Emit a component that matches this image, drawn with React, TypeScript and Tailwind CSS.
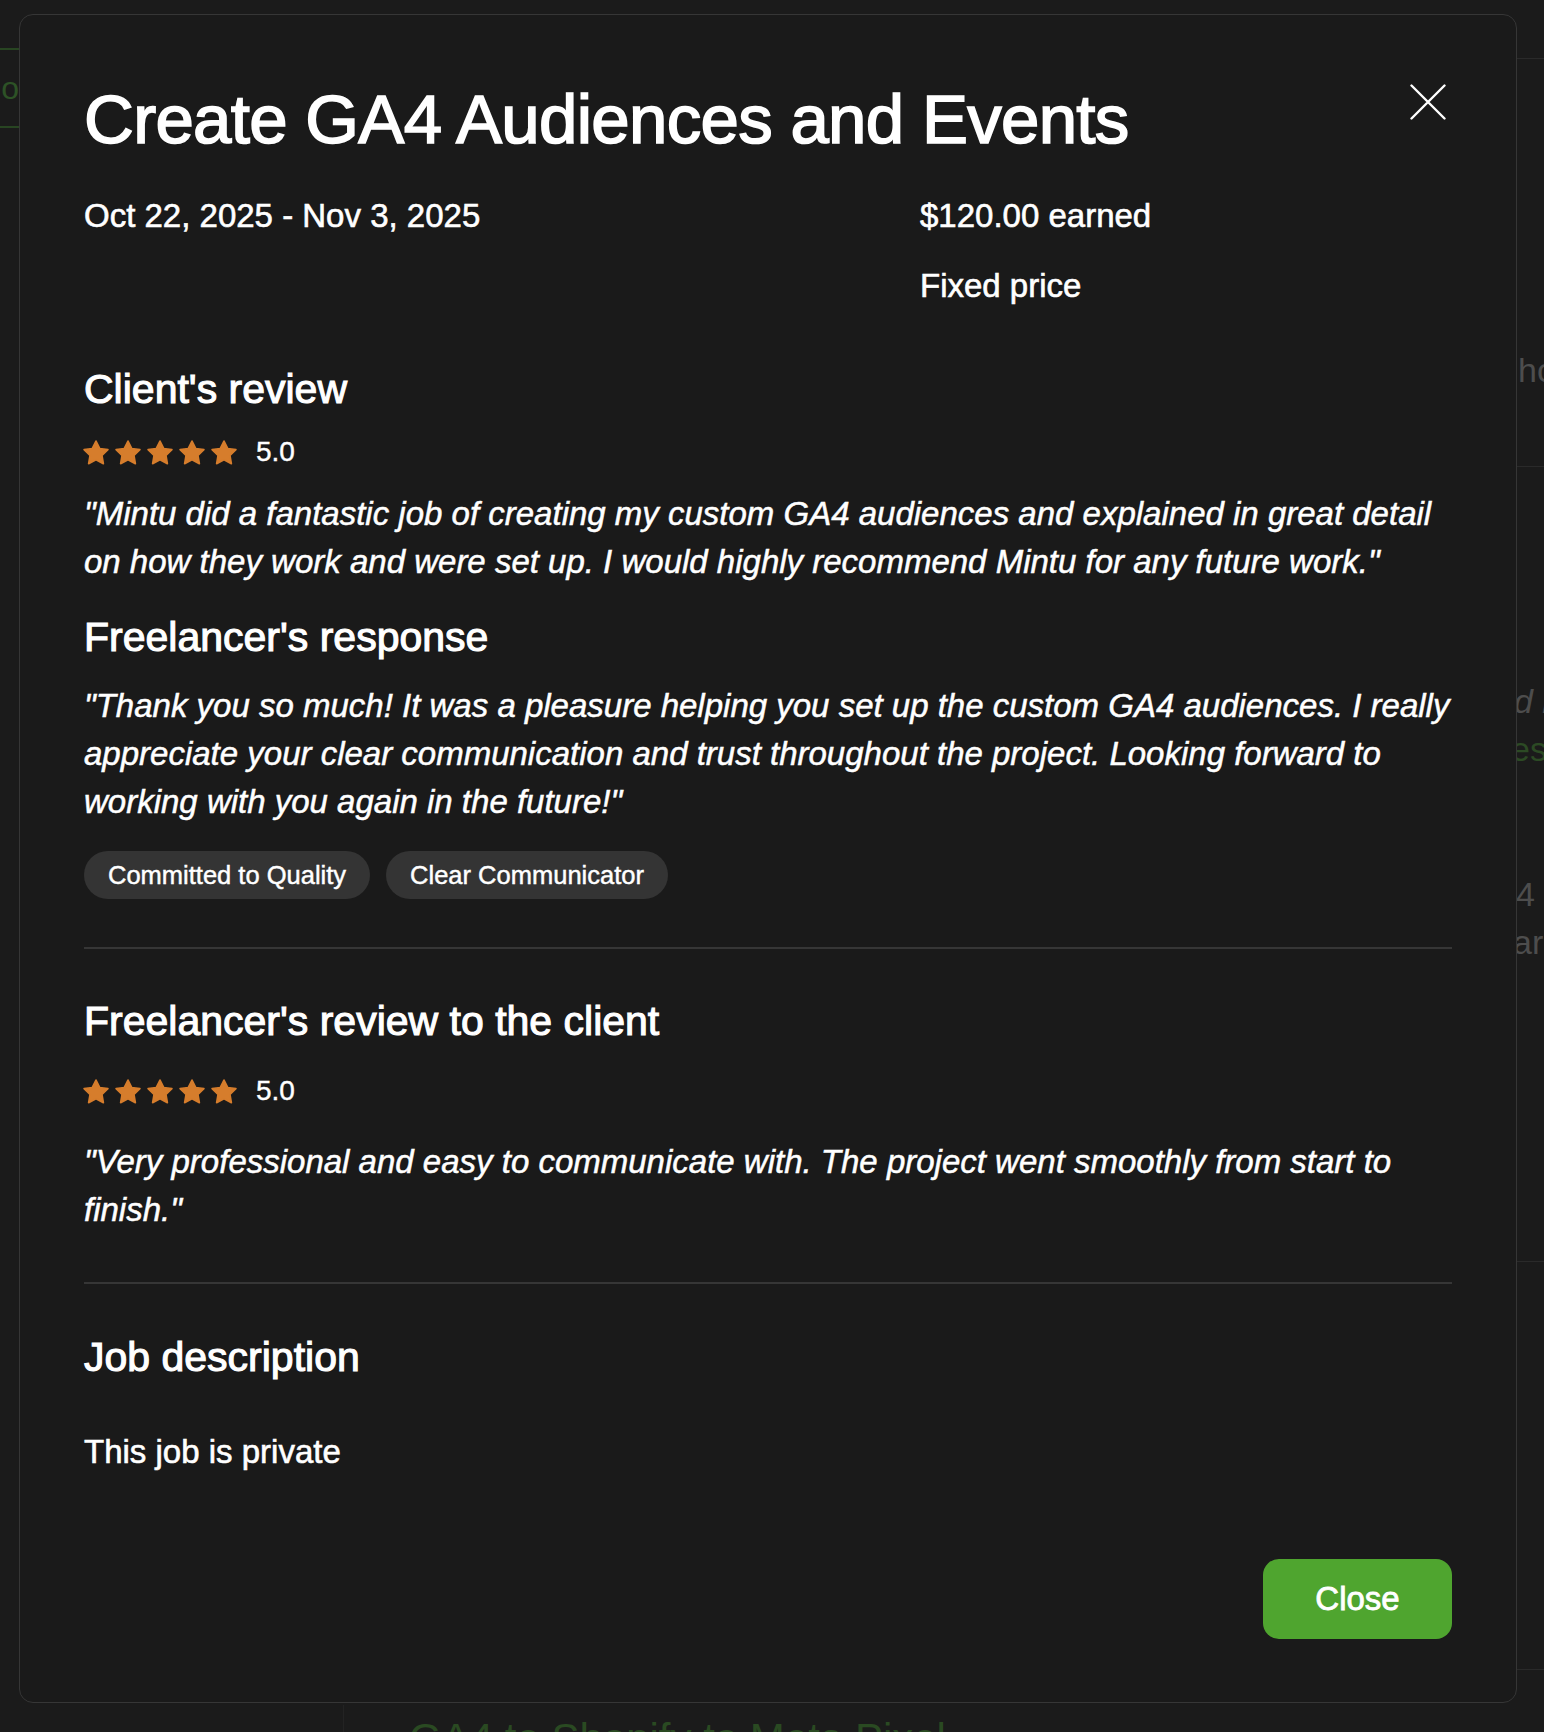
import React from "react";

const Star = () => (
  <svg width="24" height="23" viewBox="2 2 20 19.3" className="overflow-visible" aria-hidden="true">
    <path
      d="M12 2l3.09 6.26L22 9.27l-5 4.87 1.18 6.88L12 17.77l-6.18 3.25L7 14.14 2 9.27l6.91-1.01L12 2z"
      fill="#d67d2c"
      stroke="#d67d2c"
      strokeWidth="1.4"
      strokeLinejoin="round"
    />
  </svg>
);

const Rating = ({ value }: { value: string }) => (
  <div className="flex h-[32px] items-center">
    <div className="flex items-center gap-[8px]">
      {[0, 1, 2, 3, 4].map((i) => (
        <Star key={i} />
      ))}
    </div>
    <span className="ml-[20px] text-[28px] leading-[32px] text-white [-webkit-text-stroke:0.4px_white]">{value}</span>
  </div>
);

const Heading = ({ children, className = "" }: { children: React.ReactNode; className?: string }) => (
  <h2 className={`text-[41px] leading-[48px] font-normal text-white [-webkit-text-stroke:1.1px_white] ${className}`}>
    {children}
  </h2>
);

const Quote = ({ children, className = "" }: { children: React.ReactNode; className?: string }) => (
  <p className={`text-[33px] leading-[48px] italic text-white [-webkit-text-stroke:0.5px_white] ${className}`}>
    {children}
  </p>
);

const Tag = ({ label }: { label: string }) => (
  <span className="flex h-[48px] items-center rounded-full bg-[#343434] px-[24px] text-[25.5px] text-white [-webkit-text-stroke:0.45px_white]">
    {label}
  </span>
);

export default function App() {
  return (
    <div className="relative h-[1732px] w-[1544px] overflow-hidden bg-[#1b1b1b] font-['Liberation_Sans',Arial,sans-serif]">
      {/* page behind the dialog */}
      <div className="flex h-full">
        <div className="w-[19px] shrink-0 overflow-hidden pt-[48px]">
          <div className="flex h-[80px] items-center justify-end border-y-2 border-[#284522] text-[32px] text-[#2d5226]">
            o
          </div>
        </div>
        <div className="flex flex-1 flex-col justify-end">
          <div className="ml-[324px] h-[27px] overflow-hidden border-l border-[#232323] pl-[65px]">
            <div className="mt-[10px] whitespace-nowrap text-[42px] leading-[48px] text-[#2a4a22]">
              GA4 to Shopify to Meta Pixel
            </div>
          </div>
        </div>
        <div className="flex w-[27px] shrink-0 flex-col overflow-visible pt-[58px] text-[34px] text-[#4d4d4d]">
          <div className="h-px bg-[#2a2a2a]" />
          <div className="mt-[291px] h-[40px] whitespace-nowrap pl-[1px] leading-[40px]">ho</div>
          <div className="mt-[76px] h-px bg-[#2a2a2a]" />
          <div className="-ml-[3px] mt-[214px] h-[40px] whitespace-nowrap italic leading-[40px]">d in</div>
          <div className="-ml-[6px] mt-[8px] h-[40px] whitespace-nowrap leading-[40px] text-[#2c4a24]">ess</div>
          <div className="-ml-[1px] mt-[105px] h-[40px] whitespace-nowrap leading-[40px]">4 a</div>
          <div className="-ml-[4px] mt-[8px] h-[40px] whitespace-nowrap leading-[40px]">arc</div>
          <div className="mt-[299px] h-px bg-[#2a2a2a]" />
          <div className="mt-[407px] h-px bg-[#2a2a2a]" />
        </div>
      </div>

      {/* dialog */}
      <div className="absolute left-[19px] top-[14px] flex w-[1498px] flex-col rounded-[14px] border border-[#363636] bg-[#1a1a1a] px-[64px] pb-[63px] pt-[63px] text-white">
        <div className="flex items-start justify-between">
          <h1 className="text-[69px] leading-[83px] font-normal tracking-[-0.7px] text-white [-webkit-text-stroke:1.6px_white]">
            Create GA4 Audiences and Events
          </h1>
          <button className="flex h-[48px] w-[48px] items-center justify-center" aria-label="Close dialog">
            <svg width="36" height="36" viewBox="0 0 36 36" fill="none">
              <path d="M1.5 1.5L34.5 34.5M34.5 1.5L1.5 34.5" stroke="white" strokeWidth="2.4" strokeLinecap="round" />
            </svg>
          </button>
        </div>

        <div className="mt-[31px] grid grid-cols-[836px_1fr] text-[33px] leading-[48px] [-webkit-text-stroke:0.6px_white]">
          <div>Oct 22, 2025 - Nov 3, 2025</div>
          <div>
            <div>$120.00 earned</div>
            <div className="mt-[22px]">Fixed price</div>
          </div>
        </div>

        <Heading className="mt-[55px]">Client's review</Heading>
        <div className="mt-[23px]">
          <Rating value="5.0" />
        </div>
        <Quote className="mt-[22px]">
          "Mintu did a fantastic job of creating my custom GA4 audiences and explained in great detail on how they work
          and were set up. I would highly recommend Mintu for any future work."
        </Quote>

        <Heading className="mt-[27px]">Freelancer's response</Heading>
        <Quote className="mt-[21px]">
          "Thank you so much! It was a pleasure helping you set up the custom GA4 audiences. I really appreciate your
          clear communication and trust throughout the project. Looking forward to working with you again in the
          future!"
        </Quote>
        <div className="mt-[25px] flex gap-[16px]">
          <Tag label="Committed to Quality" />
          <Tag label="Clear Communicator" />
        </div>

        <div className="mt-[48px] h-[2px] bg-[#363636]" />

        <Heading className="mt-[48px]">Freelancer's review to the client</Heading>
        <div className="mt-[30px]">
          <Rating value="5.0" />
        </div>
        <Quote className="mt-[31px]">
          "Very professional and easy to communicate with. The project went smoothly from start to finish."
        </Quote>

        <div className="mt-[48px] h-[2px] bg-[#363636]" />

        <Heading className="mt-[49px]">Job description</Heading>
        <p className="mt-[47px] text-[33px] leading-[48px] [-webkit-text-stroke:0.6px_white]">This job is private</p>

        <button className="mt-[83px] flex h-[80px] w-[189px] items-center justify-center self-end rounded-[16px] bg-[#4fa52f] text-[33px] text-white [-webkit-text-stroke:0.8px_white]">
          Close
        </button>
      </div>
    </div>
  );
}
